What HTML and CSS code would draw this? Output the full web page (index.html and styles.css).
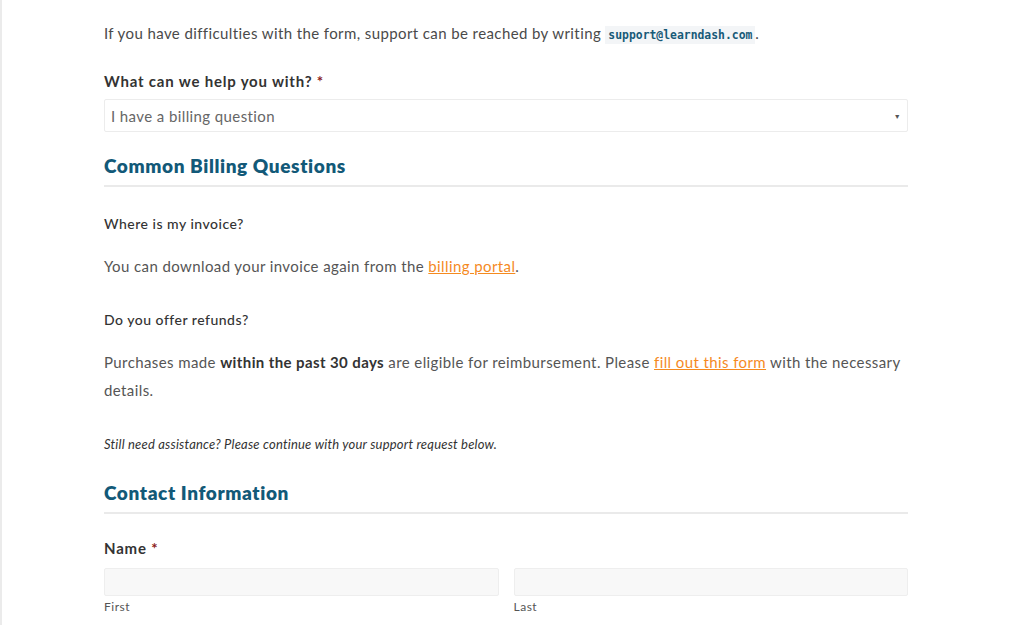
FILE: index.html
```html
<!DOCTYPE html>
<html>
<head>
<meta charset="utf-8">
<link rel="stylesheet" href="styles.css">
</head>
<body>
<div class="page">
  <main class="content">
    <p class="intro">If you have difficulties with the form, support can be reached by writing <code>support@learndash.com</code>.</p>

    <div class="field">
      <label class="label">What can we help you with? <span class="req">*</span></label>
      <div class="select"><span>I have a billing question</span><span class="caret">&#9660;</span></div>
    </div>

    <h2 class="section">Common Billing Questions</h2>

    <p class="question">Where is my invoice?</p>
    <p class="answer">You can download your invoice again from the <a href="#">billing portal</a>.</p>

    <p class="question q2">Do you offer refunds?</p>
    <p class="answer">Purchases made <strong>within the past 30 days</strong> are eligible for reimbursement. Please <a href="#">fill out this form</a> with the necessary details.</p>

    <p class="note">Still need assistance? Please continue with your support request below.</p>

    <h2 class="section s2">Contact Information</h2>

    <div class="field name">
      <label class="label">Name <span class="req">*</span></label>
      <div class="name-row">
        <div class="sub"><div class="input"></div><span class="sublabel">First</span></div>
        <div class="sub"><div class="input"></div><span class="sublabel">Last</span></div>
      </div>
    </div>
  </main>
</div>
</body>
</html>
```
FILE: styles.css
```css
html, body {
  margin: 0;
  padding: 0;
  background: #fff;
}
body {
  font-family: Lato, "Open Sans", sans-serif;
  color: #4a4a4a;
  font-size: 15px;
  letter-spacing: 0.4px;
  border-left: 2px solid #ebebeb;
  height: 625px;
  overflow: hidden;
  box-sizing: border-box;
}
.page {
  padding-left: 102px;
  width: 804px;
}
.content {
  display: flex;
  flex-direction: column;
}
p { margin: 0; }
.intro {
  line-height: 28px;
  margin-top: 19px;
}
code {
  font-family: "DejaVu Sans Mono", monospace;
  font-size: 11.4px;
  font-weight: bold;
  letter-spacing: 0;
  color: #175a78;
  background: #f3f5f7;
  padding: 2px 3px;
}
.field {
  display: flex;
  flex-direction: column;
}
.label {
  font-weight: 700;
  color: #333;
  line-height: 22px;
  margin-top: 21px;
  letter-spacing: 0.8px;
}
.req { color: #8b1a1a; }
.select {
  margin-top: 7px;
  height: 33px;
  box-sizing: border-box;
  border: 1px solid #ececec;
  border-radius: 2px;
  display: flex;
  align-items: center;
  justify-content: space-between;
  padding: 0 6px 0 6px;
  color: #666;
  font-size: 15px;
}
.caret {
  font-size: 7px;
  color: #555;
}
.section {
  margin: 21px 0 0;
  font-size: 19px;
  font-weight: 800;
  color: #125978;
  line-height: 26px;
  padding-bottom: 6px;
  border-bottom: 2px solid #eaeaea;
  letter-spacing: 0.6px;
}
.question {
  font-size: 14px;
  font-weight: 500;
  color: #333;
  line-height: 20px;
  margin-top: 27px;
  letter-spacing: 0.5px;
}
.q2 { margin-top: 30px; }
.answer {
  line-height: 28px;
  margin-top: 18px;
  color: #555;
}
.answer strong { color: #333; font-weight: 700; }
a {
  color: #f58a1f;
  text-decoration: underline;
}
.note {
  font-style: italic;
  font-size: 13px;
  color: #333;
  line-height: 18px;
  margin-top: 31px;
  letter-spacing: 0.2px;
}
.s2 { margin-top: 27px; }
.name .label { margin-top: 23px; }
.name-row {
  display: flex;
  gap: 15px;
  margin-top: 9px;
}
.sub {
  flex: 1;
  display: flex;
  flex-direction: column;
}
.input {
  height: 28px;
  background: #f8f8f8;
  border: 1px solid #eeeeee;
  border-radius: 2px;
  box-sizing: border-box;
}
.sublabel {
  font-size: 12px;
  color: #555;
  line-height: 18px;
  margin-top: 2px;
  letter-spacing: 0.5px;
}
```
